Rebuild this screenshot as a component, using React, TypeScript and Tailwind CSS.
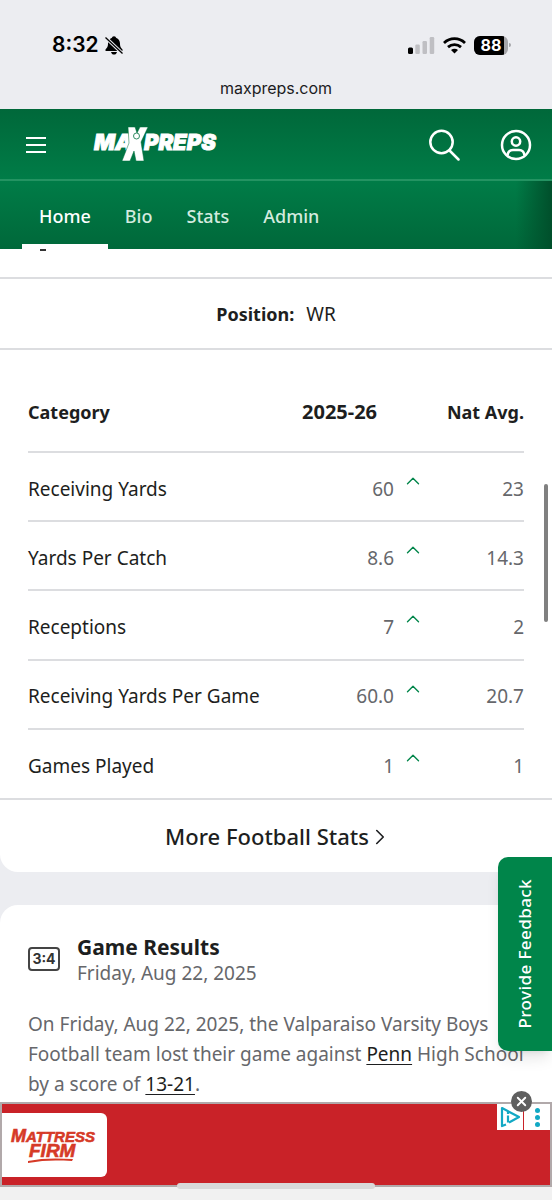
import { ChevronRight, ChevronUp, X } from 'lucide-react';

const tabs = ['Home', 'Bio', 'Stats', 'Admin'];

const stats = [
  { category: 'Receiving Yards', value: '60', avg: '23' },
  { category: 'Yards Per Catch', value: '8.6', avg: '14.3' },
  { category: 'Receptions', value: '7', avg: '2' },
  { category: 'Receiving Yards Per Game', value: '60.0', avg: '20.7' },
  { category: 'Games Played', value: '1', avg: '1' },
];

const StatusBar = () => (
  <div className="h-[109px] bg-[#ecedf1] pt-[33px] text-black">
    <div className="flex h-6 items-center justify-between pl-[52px] pr-[41px]">
      <div className="flex items-center gap-1.5 font-['Inter',sans-serif] text-[21px] font-semibold">
        8:32
        <svg width="18" height="19" viewBox="0 0 18 19" aria-label="Silent mode">
          <path d="M9 .3C7.600.3 7.100 1.200 7 1.800 4.300 2.700 3 4.900 3 7.600 3 11.300 1.800 12 .7 13.200c-.6.7-.3 1.900.8 1.900h15c1.100 0 1.400-1.200.8-1.900C16.200 12 15 11.300 15 7.600c0-2.700-1.300-4.900-4-5.800C10.900 1.200 10.400.3 9 .3Z" />
          <path d="M6 16h6c-.4 1.700-1.600 2.600-3 2.600S6.400 17.700 6 16Z" />
          <path d="M0 1 18 18" stroke="#ecedf1" strokeWidth="3.400" />
          <path d="M.5 1.500 17.500 17.500" stroke="#000" strokeWidth="1.300" />
        </svg>
      </div>
      <div className="flex items-center gap-2">
        <svg width="27" height="17" viewBox="0 0 27 17" aria-label="Signal">
          <rect x="0" y="10.500" width="5" height="6.500" rx="1.500" />
          <rect x="7.300" y="7.500" width="4.500" height="9.500" rx="1.200" fill="#bfbfc3" />
          <rect x="14.500" y="4" width="4.500" height="13" rx="1.200" fill="#bfbfc3" />
          <rect x="21.700" y="0" width="4.500" height="17" rx="1.200" fill="#bfbfc3" />
        </svg>
        <svg width="23" height="17" viewBox="0 0 23 17" fill="none" stroke="#000" strokeWidth="2.800" aria-label="Wi-Fi">
          <path d="M1 5.900c6-5.600 15-5.600 21 0" />
          <path d="M5 10.100c3.800-3.400 9.200-3.400 13 0" />
          <path d="M8 12.900c2-1.700 5-1.700 7 0L11.500 16.500Z" fill="#000" stroke="none" />
        </svg>
        <div className="flex items-center gap-px">
          <div className="flex h-[19px] w-[34px] items-center overflow-hidden rounded-md bg-[#a5a5a9]">
            <span className="flex h-full w-[30px] items-center justify-center bg-black pl-1 font-['Inter',sans-serif] text-base font-bold text-white">
              88
            </span>
          </div>
          <span className="h-1 w-0.5 rounded-r bg-[#a5a5a9]" />
        </div>
      </div>
    </div>
    <p className="mt-[19px] text-center font-['Inter',sans-serif] text-base text-[#1c1c1e]">maxpreps.com</p>
  </div>
);

const Logo = () => (
  <svg width="126" height="36" viewBox="0 0 126 36" fill="#fff" aria-label="MaxPreps">
    <g fontFamily="Inter, sans-serif" fontWeight="900" fontStyle="italic" fontSize="22" stroke="#fff" strokeWidth="0.900">
      <text x="1" y="23">MA</text>
      <text x="51" y="23">PREPS</text>
    </g>
    {/* athlete with raised arms */}
    <path d="M35 0h7l2 6 3-6h8l-7 15 3 19h-8l-2-10-4 10h-8l7-18Z" stroke="#00713f" strokeWidth="0.500" />
    <circle cx="43.500" cy="9" r="3" stroke="#00713f" strokeWidth="0.800" />
  </svg>
);

const Header = () => (
  <header className="text-white">
    <div className="flex h-[72px] items-center border-b-2 border-[#249362] bg-linear-to-b from-[#00683a] to-[#007c47] pt-0.5 pl-[26px] pr-5">
      <button aria-label="Menu" className="mr-[47px]">
        <svg width="20" height="18" viewBox="0 0 20 18" stroke="#fff" strokeWidth="2">
          <path d="M0 2h20M0 9h20M0 16h20" />
        </svg>
      </button>
      <a href="#home">
        <Logo />
      </a>
      <button aria-label="Search" className="ml-auto">
        <svg width="32" height="32" viewBox="0 0 32 32" fill="none" stroke="#fff" strokeWidth="2.500" strokeLinecap="round">
          <circle cx="13.500" cy="13" r="11.200" />
          <path d="m21.500 21.500 9 9" />
        </svg>
      </button>
      <button aria-label="Account" className="ml-10">
        <svg width="32" height="32" viewBox="0 0 32 32" fill="none" stroke="#fff" strokeWidth="2.500">
          <circle cx="16" cy="16" r="14" />
          <circle cx="16" cy="12.500" r="4.200" />
          <path d="M7.500 26.500c.4-3.800 3-5.500 5.500-5.500h6c2.500 0 5.100 1.700 5.500 5.500" />
        </svg>
      </button>
    </div>
    <nav className="flex h-[68px] bg-linear-to-b from-[#007c47] to-[#00683a] pl-[22px]">
      {tabs.map((tab, idx) => (
        <a
          key={tab}
          href={`#${tab.toLowerCase()}`}
          className={idx === 0
            ? 'flex items-center border-b-[5px] border-white px-[17px] pt-[7px] text-lg font-medium'
            : 'flex items-center px-[17px] pt-0.5 text-lg font-medium text-[#d3ebdf]'}
        >
          {tab}
        </a>
      ))}
      <span className="ml-auto w-9 bg-linear-to-r from-transparent to-[#004f2b]" />
    </nav>
  </header>
);

const StatsCard = () => (
  <section className="rounded-b-[18px] bg-white">
    <div className="h-[30px] border-b-2 border-[#dcdde0] pl-10">
      <div className="h-0.5 w-1.5 bg-[#333]" />
    </div>
    <div className="flex h-[71px] items-center justify-center border-b-2 border-[#dcdde0] pt-0.5">
      <p className="flex items-baseline gap-3">
        <span className="text-lg font-bold">Position:</span>
        <span>WR</span>
      </p>
    </div>
    <div className="border-b-2 border-[#dcdde0] px-7">
      <table className="h-[448px] w-full">
        <thead>
          <tr className="h-[102px] border-b-2 border-[#dcdde0] text-left text-lg">
            <th className="pt-[22px] font-bold">Category</th>
            <th className="w-[118px] pt-[22px] text-xl font-bold">2025-26</th>
            <th className="w-[104px] pt-[22px] text-right font-bold">Nat Avg.</th>
          </tr>
        </thead>
        <tbody>
          {stats.map((stat) => (
            <tr key={stat.category} className="h-[69px] border-b-2 border-[#dcdde0] last:border-b-0">
              <td className="pt-[5px]">{stat.category}</td>
              <td className="pt-[5px] text-[#66676b]">
                <span className="flex items-center justify-end">
                  {stat.value}
                  <ChevronUp size={22} strokeWidth={1.5} className="-mr-1 mb-4 ml-2 text-[#00854a]" />
                </span>
              </td>
              <td className="pt-[5px] text-right text-[#66676b]">{stat.avg}</td>
            </tr>
          ))}
        </tbody>
      </table>
    </div>
    <a href="#stats" className="flex h-[72px] items-center justify-center text-[22px] font-medium">
      More Football Stats
      <ChevronRight size={26} strokeWidth={1.5} className="-mr-1.5 -ml-0.5 mt-0.5" />
    </a>
  </section>
);

const ResultsCard = () => (
  <section className="h-[197px] rounded-t-[18px] bg-white px-7 pt-7">
    <div className="flex items-center gap-[17px]">
      <span className="flex h-6 w-8 items-center justify-center rounded-sm border-2 border-[#444] font-['Inter',sans-serif] text-sm font-bold text-[#333]">
        3:4
      </span>
      <div>
        <h2 className="text-[21px] leading-7 font-bold">Game Results</h2>
        <p className="leading-6 text-[#66676b]">Friday, Aug 22, 2025</p>
      </div>
    </div>
    <p className="mt-6 leading-[30px] text-[#66676b]">
      On Friday, Aug 22, 2025, the Valparaiso Varsity Boys Football team lost their game against{' '}
      <a href="#penn" className="text-[#1d1e20] underline underline-offset-3">Penn</a> High School by a score of{' '}
      <a href="#game" className="text-[#1d1e20] underline underline-offset-3">13-21</a>.
    </p>
  </section>
);

const AdBanner = () => (
  <footer className="relative bg-[#f1f1f1] pb-3.5">
    <div className="flex h-[85px] items-center justify-between border-2 border-[#b1a9aa] bg-[#c92228]">
      <a href="#ad" className="flex h-16 w-[105px] items-center justify-center rounded-r-md bg-white">
        <svg width="90" height="44" viewBox="0 0 90 44" fill="#d63a27" aria-label="Mattress Firm">
          <g fontFamily="Liberation Sans, sans-serif" fontWeight="700" fontStyle="italic" stroke="#d63a27" strokeWidth="0.600">
            <text x="1" y="19" fontSize="18">M</text>
            <text x="16" y="19" fontSize="15">ATTRESS</text>
            <text x="19" y="34" fontSize="19">FIRM</text>
          </g>
          <path d="M18 38c14-3 28-3 45-2l-1 2c-16-1-28-1-44 2Z" />
        </svg>
      </a>
      <div className="flex gap-px self-start">
        <button aria-label="Ad choices" className="flex h-[26px] w-[26px] items-center justify-center bg-white">
          <svg width="20" height="22" viewBox="0 0 20 22" fill="none" stroke="#12a8c4" strokeWidth="2.200">
            <path d="M6 18.500 2 20V2l17 9-10 5.500" strokeLinejoin="round" />
            <path d="M8 9.500v7M8 6v2" />
          </svg>
        </button>
        <button aria-label="Ad options" className="flex h-[26px] w-[26px] flex-col items-center justify-center gap-0.5 bg-white">
          <span className="size-[5px] rounded-full bg-[#12a8c4]" />
          <span className="size-[5px] rounded-full bg-[#12a8c4]" />
          <span className="size-[5px] rounded-full bg-[#12a8c4]" />
        </button>
      </div>
    </div>
    <button
      aria-label="Close ad"
      className="absolute -top-[11px] right-5 flex size-[21px] items-center justify-center rounded-full bg-[#5f5f5f] text-white"
    >
      <X size={15} strokeWidth={3} />
    </button>
    <span className="absolute bottom-3 left-1/2 h-1.5 w-[198px] -translate-x-1/2 rounded-full bg-[#d9d9d9]" />
  </footer>
);

export default function App() {
  return (
    <div className="relative min-h-screen overflow-hidden bg-[#ecedf1] font-['Noto_Sans',sans-serif] text-[19px] text-[#1d1e20]">
      <StatusBar />
      <Header />
      <main className="flex flex-col gap-[33px]">
        <StatsCard />
        <ResultsCard />
      </main>
      <AdBanner />
      <span className="absolute top-[484px] right-1 h-[138px] w-1 rounded-full bg-[#808080]" />
      <button className="absolute top-[857px] right-0 flex h-[194px] w-[54px] items-center justify-center rounded-l-[10px] bg-[#00854a] text-[17px] font-medium tracking-wide text-white shadow-lg">
        <span className="rotate-180 [writing-mode:vertical-rl]">Provide Feedback</span>
      </button>
    </div>
  );
}
